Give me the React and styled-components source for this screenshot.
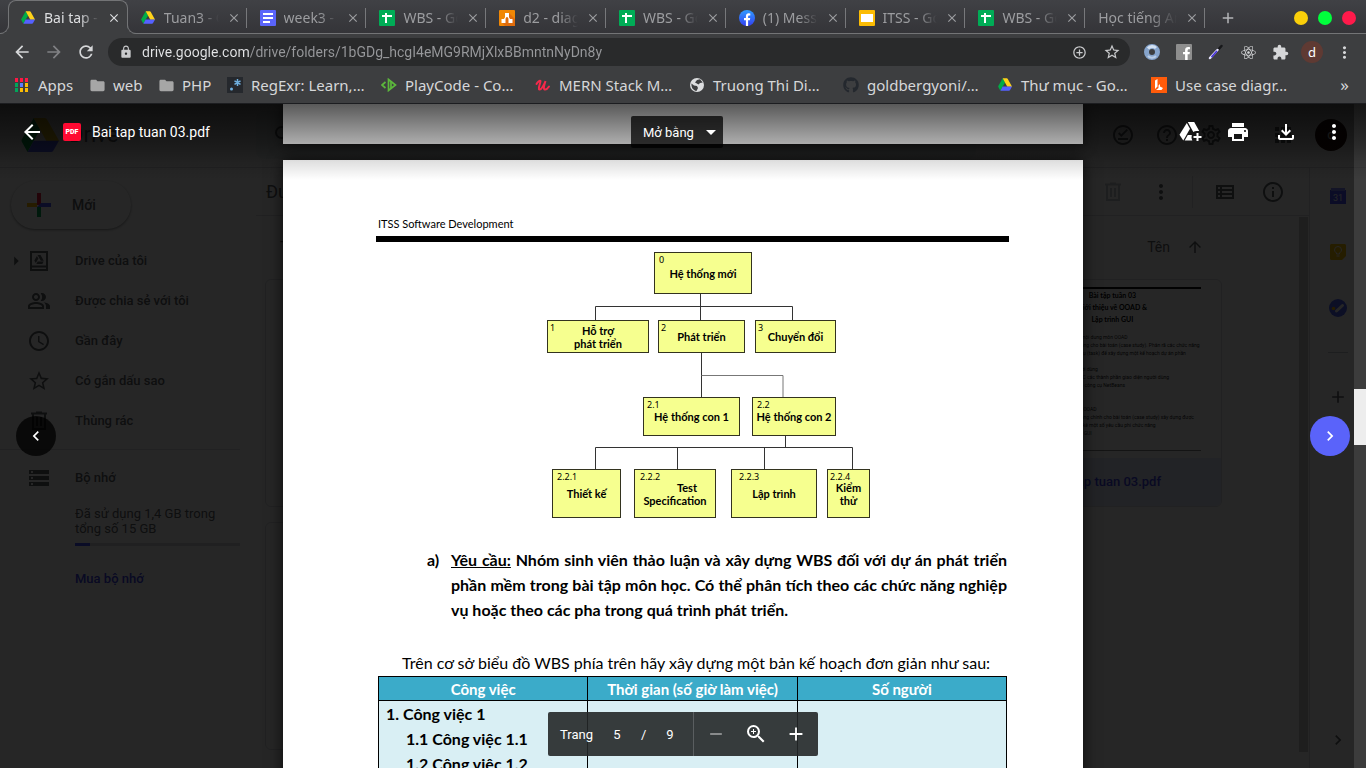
import React from "react";
import styled, { createGlobalStyle, css } from "styled-components";
import {
  MdArrowBack, MdArrowForward, MdRefresh, MdLock, MdAddCircleOutline, MdStarBorder, MdMoreVert, MdExtension,
  MdClose, MdAdd, MdRemove, MdFolder, MdPrint, MdOutlineFileDownload, MdArrowDropDown, MdArrowRight,
  MdChevronLeft, MdChevronRight, MdOutlineOfflinePin, MdHelpOutline, MdOutlineSettings, MdApps, MdSearch,
  MdOutlinePeopleAlt, MdAccessTime, MdStorage, MdInfoOutline, MdOutlineViewList, MdArrowUpward,
  MdZoomIn,
} from "react-icons/md";
import { FaReact, FaGithub, FaFacebookF } from "react-icons/fa";

const ui = `"Noto Sans", "Open Sans", sans-serif`;
const roboto = `Roboto, "Noto Sans", sans-serif`;
const doc = `Lato, "Open Sans", sans-serif`;
const frame = "#3d3e40";
const line = "#737476";

const Global = createGlobalStyle`
  *, *::before, *::after { box-sizing: border-box; }
  html, body { margin: 0; height: 100%; overflow: hidden; }
  button, input { font: inherit; color: inherit; border: 0; padding: 0; margin: 0; background: none; }
  a { color: inherit; text-decoration: none; }
  svg { display: block; flex: none; }
`;

const Window = styled.div`
  height: 100vh;
  display: flex;
  flex-direction: column;
  overflow: hidden;
  font-family: ${ui};
`;

/* ---------- browser frame ---------- */

const Frame = styled.header`
  flex: none;
  background: ${frame};
  border-bottom: 1px solid #1c1d20;
  color: #d6d7d9;
`;

const TabStrip = styled.div`
  height: 34px;
  display: flex;
  padding-left: 8px;
  background: linear-gradient(#404145, #343438);
  box-shadow: inset 0 -1px 0 ${line};
`;

const Tabs = styled.div`
  flex: 1;
  min-width: 0;
  display: flex;
`;

const flare = css`
  content: "";
  position: absolute;
  bottom: 0;
  width: 10px;
  height: 10px;
  border: 0 solid ${line};
  border-bottom-width: 1px;
  clip-path: inset(0);
  box-shadow: 0 0 0 8px ${frame};
`;

const Tab = styled.div`
  position: relative;
  flex: 1 1 0;
  min-width: 0;
  display: flex;
  align-items: center;
  gap: 8px;
  padding: 0 8px 0 11px;
  border: 1px solid transparent;
  border-bottom: 0;
  color: #9c9da0;
  font-size: 14px;
  ${(p) => p.$active && css`
    z-index: 1;
    color: #dddee0;
    background: ${frame};
    border-color: ${line};
    border-radius: 8px 8px 0 0;
    &::before { ${flare} left: -10px; border-right-width: 1px; border-bottom-right-radius: 9px; }
    &::after { ${flare} right: -10px; border-left-width: 1px; border-bottom-left-radius: 9px; }
  `}
  ${(p) => p.$divided && css`
    background: linear-gradient(#77787b, #77787b) right 7px / 1px 20px no-repeat;
  `}
`;

const TabTitle = styled.span`
  flex: 1;
  min-width: 0;
  overflow: hidden;
  white-space: nowrap;
  line-height: 20px;
  mask-image: linear-gradient(90deg, #000 65%, transparent 100%);
`;

const IconButton = styled.button`
  display: grid;
  place-items: center;
  flex: none;
  width: ${(p) => p.$w || 32}px;
  height: ${(p) => p.$h || 28}px;
  color: ${(p) => p.$color || "inherit"};
`;

const StripEnd = styled.div`
  width: 160px;
  display: flex;
  align-items: center;
  padding: 2px 10px 0 6px;
`;

const WindowDots = styled.div`
  margin-left: auto;
  display: flex;
  gap: 10px;
`;

const Dot = styled.button`
  width: 14px;
  height: 14px;
  border-radius: 50%;
  background: ${(p) => p.$fill};
`;

const AddressRow = styled.div`
  height: 36px;
  display: flex;
  align-items: center;
  padding: 0 6px;
`;

const Omnibox = styled.div`
  flex: 1;
  min-width: 0;
  height: 28px;
  margin: 0 6px;
  padding: 0 2px 0 11px;
  display: flex;
  align-items: center;
  gap: 9px;
  border-radius: 14px;
  background: #292a2b;
  color: #c9cacc;
`;

const Address = styled.input`
  flex: 1;
  min-width: 0;
  font-family: ${roboto};
  font-size: 14px;
  line-height: 20px;
  outline: 0;
  background: linear-gradient(90deg, #e4e5e7 107px, #97989b 107px);
  -webkit-background-clip: text;
  background-clip: text;
  color: transparent;
`;

const Avatar = styled.span`
  display: grid;
  place-items: center;
  width: ${(p) => p.$size}px;
  height: ${(p) => p.$size}px;
  border-radius: 50%;
  background: ${(p) => p.$fill};
  color: #fff;
  font-size: 13px;
  line-height: 16px;
`;

const BookmarkRow = styled.nav`
  height: 33px;
  display: flex;
  align-items: center;
  gap: 16px;
  padding: 0 17px 4px 14px;
`;

const Bookmark = styled.a`
  display: flex;
  align-items: center;
  gap: 8px;
  font-size: 15px;
  line-height: 24px;
  white-space: nowrap;
`;

const SiteIcon = styled.span`
  width: 16px;
  height: 16px;
  display: grid;
  place-items: center;
  flex: none;
`;

const BookmarkText = styled.span`
  width: ${(p) => p.$w}px;
`;

const More = styled.button`
  margin-left: auto;
  font-size: 17px;
  line-height: 24px;
`;

/* ---------- drive ---------- */

const Viewport = styled.main`
  position: relative;
  flex: 1;
  min-height: 0;
  overflow: hidden;
  background: #fff;
`;

const Drive = styled.div`
  height: 100%;
  display: flex;
  flex-direction: column;
  font-family: ${roboto};
  color: #5f6368;
`;

const DriveHeader = styled.div`
  flex: none;
  height: 64px;
  display: flex;
  align-items: center;
  padding: 0 19px 2px 21px;
  border-bottom: 1px solid #dadce0;
`;

const Brand = styled.div`
  width: 235px;
  display: flex;
  align-items: center;
  gap: 10px;
  font-size: 22px;
  line-height: 28px;
`;

const Search = styled.div`
  flex: 0 1 720px;
  height: 48px;
  padding: 0 16px;
  display: flex;
  align-items: center;
  border-radius: 8px;
  background: #f1f3f4;
`;

const HeaderTools = styled.div`
  margin-left: auto;
  display: flex;
  align-items: center;
  gap: 4px;
`;

const SupportTools = styled.div`
  display: flex;
  gap: 4px;
  margin-right: 20px;
`;

const DriveBody = styled.div`
  flex: 1;
  min-height: 0;
  display: flex;
`;

const Sidebar = styled.aside`
  flex: none;
  width: 256px;
  font-size: 13px;
  font-weight: 500;
`;

const NewButton = styled.button`
  margin: 13px 0 12px 11px;
  width: 120px;
  height: 48px;
  padding-left: 16px;
  display: flex;
  align-items: center;
  gap: 21px;
  border-radius: 24px;
  font-size: 14px;
  font-weight: 500;
  box-shadow: 0 1px 2px rgba(60, 64, 67, 0.4), 0 1px 3px 1px rgba(60, 64, 67, 0.15);
`;

const NavLink = styled.a`
  height: 40px;
  display: grid;
  grid-template-columns: 18px 24px 1fr;
  column-gap: 12px;
  align-items: center;
  padding-left: 7px;
  & > svg { justify-self: center; }
`;

const NavIcon = styled.span`
  width: 24px;
  margin-left: -10px;
`;

const NavText = styled.span`
  margin-left: -10px;
  padding: 0 0 2px 12px;
`;

const Storage = styled.section`
  width: 240px;
  margin-top: 8px;
  padding-top: 8px;
  border-top: 1px solid #dadce0;
`;

const StorageInfo = styled.div`
  padding: 8px 0 0 75px;
  font-weight: 400;
  line-height: 15px;
`;

const Meter = styled.div`
  height: 3px;
  margin: 7px 0 23px;
  background: linear-gradient(90deg, #4550ff 15px, #d4d6da 15px);
`;

const BuyLink = styled.a`
  color: #3c42e8;
  font-weight: 500;
  line-height: 20px;
`;

const Content = styled.section`
  flex: 1;
  min-width: 0;
  display: flex;
  flex-direction: column;
`;

const PathRow = styled.div`
  height: 48px;
  flex: none;
  display: flex;
  align-items: center;
  padding: 0 16px 0 10px;
  border-bottom: 1px solid #dadce0;
  font-size: 18px;
`;

const PathTools = styled.div`
  margin-left: auto;
  display: flex;
  align-items: center;
  gap: 8px;
`;

const Divider = styled.span`
  width: 1px;
  height: 32px;
  margin: 0 4px 0 3px;
  background: #dadce0;
`;

const Files = styled.div`
  flex: 1;
  min-height: 0;
  display: flex;
  padding: 1px 1px 16px 9px;
`;

const FileArea = styled.div`
  flex: 1;
  min-width: 0;
  height: 100%;
  padding-right: 77px;
  overflow: hidden;
`;

const SortRow = styled.div`
  height: 62px;
  display: flex;
  align-items: center;
  justify-content: space-between;
  padding: 0 18px 2px 15px;
  font-size: 14px;
`;

const SortButton = styled.button`
  display: flex;
  align-items: center;
  gap: 16px;
`;

const Cards = styled.div`
  display: grid;
  grid-template-columns: repeat(4, 1fr);
  grid-auto-rows: 228px;
  gap: 15px 16px;
`;

const Card = styled.article`
  display: flex;
  flex-direction: column;
  justify-content: space-between;
  border: 1px solid #dadce0;
  border-radius: 6px;
  overflow: hidden;
`;

const Thumb = styled.div`
  margin: 7px 20px 0;
  border-top: 2px solid #111;
  border-bottom: 1px solid #888;
  height: 164px;
  overflow: hidden;
  color: #222;
  font-size: 5px;
  line-height: 8px;
  white-space: pre;
  padding-left: 40px;
`;

const ThumbTitle = styled.div`
  margin: 0 0 8px -32px;
  color: #000;
  font-family: ${doc};
  font-size: 7px;
  font-weight: 700;
  line-height: 12px;
  text-align: center;
`;

const CardName = styled.div`
  height: 48px;
  padding-left: 55px;
  line-height: 48px;
  font-size: 13px;
  font-weight: 500;
  color: #3c42e8;
  background: #e4e8fb;
`;

const InnerScroll = styled.div`
  width: 9px;
  background: #c6c6c6;
`;

const SidePanel = styled.aside`
  flex: none;
  width: 57px;
  border-left: 1px solid #dadce0;
  display: flex;
  flex-direction: column;
  align-items: center;
  padding: 16px 0;
  gap: 32px;
`;

const PanelRule = styled.span`
  width: 20px;
  height: 1px;
  background: #c4c7cc;
`;

const PanelEnd = styled.div`
  margin-top: auto;
`;

/* ---------- preview ---------- */

const Preview = styled.div`
  position: absolute;
  inset: 0;
  background: rgba(0, 0, 0, 0.85);
  font-family: ${roboto};
  color: #fff;
`;

const Pages = styled.div`
  height: 100%;
  overflow: hidden;
  display: flex;
  flex-direction: column;
  align-items: center;
  gap: 16px;
`;

const Sheet = styled.article`
  flex: none;
  width: 800px;
  max-width: 100%;
  min-height: 40px;
  background: #fff;
  color: #000;
  box-shadow: 0 0 14px rgba(0, 0, 0, 0.7);
`;

const SheetBody = styled.div`
  padding: 56px 74px 40px 93px;
  font-family: ${doc};
`;

const RunningHead = styled.div`
  padding-left: 2px;
  font-size: 11px;
  line-height: 16px;
`;

const HeadRule = styled.div`
  height: 6px;
  margin-top: 4px;
  background: #000;
`;

const Diagram = styled.div`
  position: relative;
  height: 305px;
`;

const Links = styled.svg`
  position: absolute;
  left: 0;
  top: 0;
`;

const Node = styled.div`
  position: absolute;
  left: ${(p) => p.$x}px;
  top: ${(p) => p.$y}px;
  width: ${(p) => p.$w}px;
  height: ${(p) => p.$h}px;
  display: flex;
  flex-direction: column;
  align-items: center;
  justify-content: center;
  border: 1px solid #33331f;
  background: #f6ff8f;
  font-size: 11px;
  font-weight: 700;
  line-height: 13px;
  white-space: nowrap;
`;

const NodeNumber = styled.span`
  position: absolute;
  top: 0;
  left: ${(p) => p.$inset}px;
  font-family: ${ui};
  font-size: 9px;
  font-weight: 400;
`;

const NodeLine = styled.span`
  padding-left: ${(p) => p.$indent || 0}px;
`;

const Task = styled.div`
  display: grid;
  grid-template-columns: 24px 1fr;
  padding: 0 2px 0 51px;
  font-size: 16px;
  font-weight: 700;
  line-height: 25px;
`;

const TaskText = styled.p`
  margin: 0;
  text-align: justify;
`;

const Intro = styled.p`
  margin: 27px 0 0 26px;
  font-size: 16px;
  line-height: 27px;
  white-space: nowrap;
`;

const PlanTable = styled.table`
  width: calc(100% - 4px);
  margin: 0 2px;
  table-layout: fixed;
  border-collapse: collapse;
  font-size: 16px;
  line-height: 25px;
  font-weight: 700;
  th, td { border: 1px solid #000; }
  th { padding: 0; height: 24px; font-size: 15px; line-height: 22px; background: #3babc9; color: #fff; }
  td { padding: 0 7px; background: #d9eff4; vertical-align: top; }
`;

const Step = styled.div`
  padding-left: ${(p) => (p.$sub ? 20 : 0)}px;
`;

const PreviewBar = styled.div`
  position: absolute;
  inset: 0 0 auto 0;
  height: 76px;
  display: flex;
  align-items: flex-start;
  padding: 8px 12px 0;
  background: linear-gradient(rgba(0, 0, 0, 0.65), rgba(0, 0, 0, 0.32) 52%, rgba(0, 0, 0, 0.12) 76%, transparent);
`;

const FileName = styled.div`
  display: flex;
  align-items: center;
  gap: 11px;
  height: 40px;
  padding-left: 11px;
  font-size: 14px;
`;

const PdfBadge = styled.span`
  width: 18px;
  height: 18px;
  border-radius: 2px;
  background: #ff0a32;
  font-size: 7px;
  font-weight: 900;
  line-height: 18px;
  text-align: center;
`;

const BarTools = styled.div`
  margin-left: auto;
  display: flex;
  gap: 8px;
`;

const OpenWith = styled.button`
  position: absolute;
  top: 12px;
  left: calc(50% - 52px);
  width: 92px;
  height: 32px;
  display: flex;
  align-items: center;
  justify-content: space-between;
  padding: 0 0 0 12px;
  border-radius: 2px;
  background: rgba(0, 0, 0, 0.75);
  font-size: 13px;
`;

const Turn = styled.button`
  position: absolute;
  top: 312px;
  ${(p) => p.$side}: 16px;
  width: 40px;
  height: 40px;
  display: grid;
  place-items: center;
  border-radius: 50%;
  background: ${(p) => p.$fill};
`;

const Pager = styled.div`
  position: absolute;
  left: 50%;
  bottom: 12px;
  transform: translateX(-50%);
  width: 270px;
  height: 44px;
  display: flex;
  align-items: center;
  border-radius: 2px;
  background: rgba(35, 39, 40, 0.9);
  font-size: 13px;
`;

const PageCount = styled.div`
  width: 146px;
  height: 100%;
  display: flex;
  align-items: center;
  padding-left: 12px;
  border-right: 1px solid #5a5e60;
`;

const PageInput = styled.input`
  width: 32px;
  margin: 0 8px;
  text-align: center;
`;

const Total = styled.span`
  margin-left: 20px;
`;

const ZoomTools = styled.div`
  display: flex;
  padding-left: 2px;
`;

const ScrollTrack = styled.div`
  position: absolute;
  inset: 0 0 0 auto;
  width: 12px;
  padding-top: 285px;
  background: rgba(255, 255, 255, 0.1);
`;

const ScrollThumb = styled.div`
  height: 56px;
  background: #ededed;
`;

/* ---------- drawings ---------- */

const DriveLogo = ({ size = 14 }) => (
  <svg width={size} height={Math.round(size * 0.9)} viewBox="0 0 87 78">
    <path fill="#00ac47" d="M29 0 44 26 15 78 2 55q-2-3 0-6z" />
    <path fill="#ffd31a" d="M29 0h26q3 0 5 4l25 44q2 3 2 5H58z" />
    <path fill="#5561ff" d="M29 52h58L74 75q-2 3-5 3H15z" />
  </svg>
);
const Sheets = () => (
  <svg width="16" height="16"><rect width="16" height="16" rx="1" fill="#00ac56" /><path fill="#fff" d="M3 5h10v2H8v6H6V7H3zM6 3h2v3H6z" /></svg>
);
const Docs = () => (
  <svg width="16" height="16"><rect width="16" height="16" rx="1" fill="#5a64fa" /><path stroke="#fff" strokeWidth="2" d="M3 4h10M3 8h10M3 12h7" /></svg>
);
const Slides = () => (
  <svg width="16" height="16"><rect width="16" height="16" rx="1" fill="#fbbc04" /><path fill="#fff" d="M2 4h12v8H2z" /></svg>
);
const Diagrams = () => (
  <svg width="16" height="16"><rect width="16" height="16" rx="1" fill="#f08705" /><path fill="#df6c0c" d="m10 3 6 6v7H6l-3-3z" /><path fill="#fff" d="M6 3h4v4H6zM2.500 9h4v4h-4zM9.500 9h4v4h-4z" /><path stroke="#fff" strokeWidth="1.300" d="M7.500 6 5 10M8.500 6l2.500 4" /></svg>
);
const Facebook = () => (
  <svg width="16" height="16" viewBox="0 0 16 16">
    <defs><linearGradient id="fb" x2="0" y2="1"><stop stopColor="#2f9bff" /><stop offset="1" stopColor="#3440f0" /></linearGradient></defs>
    <circle cx="8" cy="8" r="8" fill="url(#fb)" /><path fill="#fff" d="M6.900 16v-5.700H5V8h1.900V6.400C6.900 4.300 8 3.300 9.700 3.300l1.600.1v2h-1c-.9 0-1.200.5-1.200 1.200V8h2.100l-.3 2.300H9.100V16z" />
  </svg>
);
const AppsGrid = () => (
  <svg width="14" height="14">
    {["#ff1744", "#00a65a", "#fbbc04"].map((c, r) => [0, 5, 10].map((x, i) => (
      <rect key={r + "-" + x} x={x} y={r * 5} width="3" height="4" fill={r === 1 && i === 1 ? "#5a7bff" : r === 1 && i === 2 ? "#fbbc04" : r === 2 && i === 0 ? "#00a65a" : c} />
    )))}
  </svg>
);
const RegExr = () => (
  <svg width="16" height="16"><rect width="16" height="16" fill="#25282d" /><circle cx="4.500" cy="12" r="1.500" fill="#70b0e0" /><path stroke="#70b0e0" strokeWidth="1.500" d="M10.500 2v7M7.500 3.800l6 3.500M13.500 3.800l-6 3.500" /></svg>
);
const PlayCode = () => (
  <svg width="16" height="14" fill="none" stroke="#5cb83c" strokeWidth="1.700"><path d="M4.500 4 1 7l3.500 3M7.500 1.500 14.500 7l-7 5.500z" /><path d="M10 4v6" /></svg>
);
const Udemy = () => (
  <svg width="16" height="16" fill="none" stroke="#f5294a" strokeWidth="2" strokeLinecap="round"><path d="M1.500 7C3 4.500 5 3 5.500 4S2.500 12 4.500 12.500 9.500 7 10.500 4C9.500 7 8 12 9.700 12.500S13 11 14 9.500" /></svg>
);
const Globe = () => (
  <svg width="16" height="16"><circle cx="8" cy="8" r="7" fill="#dcdddf" /><path fill={frame} d="M2.500 6.500 5 8.500l3 .5 1 2-1.500 3C4 13.500 2 10 2.500 6.500zM8 3l3-.8 2.800 3.300L11 6 9.500 7.500 7 6l-1-.5z" /></svg>
);
const Lucid = () => (
  <svg width="16" height="16"><rect width="16" height="16" fill="#ff5b0a" /><path fill="#fff" d="M4 3.500 6.500 2v7.500L4 12zM7.500 8.500 9 7v2.500l3 1.500-1.500 2H5l2.500-2z" /></svg>
);
const Ring = () => (
  <svg width="16" height="16" fill="none"><circle cx="8" cy="8" r="5.500" stroke="#86a4cc" strokeWidth="5" /><path d="M4 4.500A5.500 5.500 0 0 1 12 4" stroke="#d3e1f2" strokeWidth="3" /><path d="M4 12a5.500 5.500 0 0 0 8 0" stroke="#b9cce5" strokeWidth="2" /></svg>
);
const Picker = () => (
  <svg width="16" height="16" fill="none" strokeLinecap="round"><path d="m8.500 7.500 5-5.500" stroke="#17181a" strokeWidth="2.500" /><path d="m2 14 7.500-8" stroke="#e6e3ff" strokeWidth="2.500" /><path d="m4 12.500 4.500-5" stroke="#4a35d8" strokeWidth="1.800" /></svg>
);
const MyDriveIcon = () => (
  <svg width="24" height="24"><path fill="none" stroke="currentColor" strokeWidth="2" d="M4 3h16v18H4zM4 17.500h16" /><path fill="currentColor" d="M10.500 6h3l3.300 5.700h-3zM9.900 7l1.500 2.600L8.800 14l-1.500-2.500zM10.700 12.500h6L15.300 15H9.300z" /></svg>
);
const Trash = () => (
  <svg width="24" height="24" fill="none" stroke="currentColor" strokeWidth="2"><path d="M4 4.500h16M9 3.500h6M6 5v15h12V5M10 8v9M14 8v9" /></svg>
);
const AddToDrive = () => (
  <svg width="24" height="24" fill="#fff">
    <path d="M8.800 3 12 8.700 5.300 20.500 1.500 14.800z" />
    <path d="M9.800 2h6.400l5 9h-2.700q-1.700 0-3.200 1z" />
    <path d="M9.800 15h4q-.8 2.800.5 5.500H6.700z" />
    <path d="M18.500 13h2v3h3v2h-3v3h-2v-3h-3v-2h3z" />
  </svg>
);
const ColorPlus = () => (
  <svg width="24" height="24"><path fill="#ea1f3c" d="M10 0h4v12h-4z" /><path fill="#fbbc04" d="M0 10h10v4H0z" /><path fill="#4e58ff" d="M14 10h10v4H10z" /><path fill="#00a650" d="M10 14h4v10h-4z" /></svg>
);
const Calendar = () => (
  <svg width="16" height="16"><path fill="#4a50ff" d="M0 2h16v14H0z" /><path fill="#7d84ff" d="M1 0h14v3H1z" /><text x="8" y="13" textAnchor="middle" fontFamily="Roboto" fontSize="9" fill="#fff">31</text></svg>
);
const Keep = () => (
  <svg width="16" height="16"><path fill="#f9bf00" d="M1 0h14l1 1v11l-4 4H1l-1-1V1z" /><path fill="none" stroke="#fff" d="M6.500 10V9Q4.500 7.500 4.500 6a3.500 3.500 0 0 1 7 0q0 1.500-2 3v1zM6.500 12h3" /></svg>
);
const Tasks = () => (
  <svg width="18" height="18"><circle cx="9" cy="9" r="9" fill="#4f63f5" /><path stroke="#fff" strokeWidth="3" strokeLinecap="round" d="m7.500 12 6-5.500" /><circle cx="4.500" cy="9.500" r="1.800" fill="#fbbc04" /></svg>
);

/* ---------- data ---------- */

const tabs = [
  ["Bai tap - Google Drive", <DriveLogo />], ["Tuan3 - Google Drive", <DriveLogo />], ["week3 - Google Docs", <Docs />],
  ["WBS - Google Sheets", <Sheets />], ["d2 - diagrams.net", <Diagrams />], ["WBS - Google Sheets", <Sheets />],
  ["(1) Messenger", <Facebook />], ["ITSS - Google Slides", <Slides />], ["WBS - Google Sheets", <Sheets />],
  ["Học tiếng Anh", null],
];

const bookmarks = [
  ["Apps", 35, <AppsGrid />], ["web", 29, <MdFolder size={17} color="#a6a6a6" />], ["PHP", 29, <MdFolder size={17} color="#a6a6a6" />],
  ["RegExr: Learn,…", 114, <RegExr />], ["PlayCode - Co…", 114, <PlayCode />], ["MERN Stack M…", 114, <Udemy />],
  ["Truong Thi Di…", 114, <Globe />], ["goldbergyoni/…", 114, <FaGithub size={16} color="#24282e" />],
  ["Thư mục - Go…", 114, <DriveLogo />], ["Use case diagr…", 114, <Lucid />],
];

const navItems = [
  ["Drive của tôi", <MyDriveIcon />], ["Được chia sẻ với tôi", <MdOutlinePeopleAlt size={24} />], ["Gần đây", <MdAccessTime size={24} />],
  ["Có gắn dấu sao", <MdStarBorder size={24} />], ["Thùng rác", <Trash />],
];

const nodes = [
  { x: 278, y: 10, w: 98, h: 42, n: "0", inset: 4, text: ["Hệ thống mới"] },
  { x: 171, y: 78, w: 102, h: 33, n: "1", inset: 2, text: ["Hỗ trợ", "phát triển"] },
  { x: 282, y: 78, w: 87, h: 33, n: "2", inset: 2, text: ["Phát triển"] },
  { x: 379, y: 78, w: 81, h: 33, n: "3", inset: 2, text: ["Chuyển đổi"] },
  { x: 267, y: 155, w: 97, h: 39, n: "2.1", inset: 3, text: ["Hệ thống con 1"] },
  { x: 376, y: 155, w: 84, h: 39, n: "2.2", inset: 4, text: ["Hệ thống con 2"] },
  { x: 176, y: 227, w: 69, h: 49, n: "2.2.1", inset: 4, text: ["Thiết kế"] },
  { x: 258, y: 227, w: 82, h: 49, n: "2.2.2", inset: 5, indent: 24, text: ["Test", "Specification"] },
  { x: 355, y: 227, w: 86, h: 49, n: "2.2.3", inset: 7, text: ["Lập trình"] },
  { x: 451, y: 227, w: 43, h: 49, n: "2.2.4", inset: 2, text: ["Kiểm", "thử"] },
];

const thumbText = `Tìm hiểu về nội dung môn OOAD
Các chức năng cho bài toán (case study). Phân rã các chức năng
Các nhiệm vụ (task) để xây dựng một kế hoạch dự án phần

Đồ họa người dùng
Mô hình MVC các thành phần giao diện người dùng
Lập GUI trên công cụ NetBeans
Giao diện

Về nội dung OOAD
Các chức năng chính cho bài toán (case study) xây dựng được
Bảng và liệt kê một số yêu cầu phi chức năng
Kết lập trình GUI`;

/* ---------- sections ---------- */

function BrowserFrame() {
  return (
    <Frame>
      <TabStrip>
        <Tabs>
          {tabs.map(([title, icon], i) => (
            <Tab key={i} $active={i === 0} $divided={i > 0}>
              {icon && <SiteIcon>{icon}</SiteIcon>}
              <TabTitle>{title}</TabTitle>
              <IconButton $w={12} $h={20} aria-label="Close tab"><MdClose size={14} /></IconButton>
            </Tab>
          ))}
        </Tabs>
        <StripEnd>
          <IconButton aria-label="New tab" $color="#b4b5b8"><MdAdd size={18} /></IconButton>
          <WindowDots>
            <Dot $fill="#facf0a" aria-label="Minimise" />
            <Dot $fill="#00ff3c" aria-label="Maximise" />
            <Dot $fill="#ff1a4b" aria-label="Close" />
          </WindowDots>
        </StripEnd>
      </TabStrip>
      <AddressRow>
        <IconButton aria-label="Back"><MdArrowBack size={20} /></IconButton>
        <IconButton aria-label="Forward" $color="#808184"><MdArrowForward size={20} /></IconButton>
        <IconButton aria-label="Reload"><MdRefresh size={20} /></IconButton>
        <Omnibox>
          <MdLock size={14} />
          <Address aria-label="Address" defaultValue="drive.google.com/drive/folders/1bGDg_hcgI4eMG9RMjXlxBBmntnNyDn8y" />
          <IconButton $w={15} aria-label="Zoom"><MdAddCircleOutline size={15} /></IconButton>
          <IconButton aria-label="Bookmark"><MdStarBorder size={18} /></IconButton>
        </Omnibox>
        <IconButton aria-label="Ring extension"><Ring /></IconButton>
        <IconButton aria-label="Facebook extension">
          <svg width="16" height="16"><rect width="16" height="16" rx="1" fill="#8e8e8e" /><g transform="translate(4 3)"><FaFacebookF size={13} color="#fff" /></g></svg>
        </IconButton>
        <IconButton aria-label="Colour picker"><Picker /></IconButton>
        <IconButton aria-label="React extension"><FaReact size={15} /></IconButton>
        <IconButton aria-label="Extensions"><MdExtension size={17} /></IconButton>
        <IconButton aria-label="Profile"><Avatar $size={22} $fill="#5f3a33">d</Avatar></IconButton>
        <IconButton aria-label="Menu"><MdMoreVert size={19} /></IconButton>
      </AddressRow>
      <BookmarkRow>
        {bookmarks.map(([text, w, icon]) => (
          <Bookmark href="#" key={text}>
            <SiteIcon>{icon}</SiteIcon>
            <BookmarkText $w={w}>{text}</BookmarkText>
          </Bookmark>
        ))}
        <More aria-label="More bookmarks">»</More>
      </BookmarkRow>
    </Frame>
  );
}

function DriveApp() {
  return (
    <Drive>
      <DriveHeader>
        <Brand><DriveLogo size={38} />Drive</Brand>
        <Search><MdSearch size={24} /></Search>
        <HeaderTools>
          <SupportTools>
            <IconButton $w={40} aria-label="Offline"><MdOutlineOfflinePin size={24} /></IconButton>
            <IconButton $w={40} aria-label="Help"><MdHelpOutline size={24} /></IconButton>
            <IconButton $w={40} aria-label="Settings"><MdOutlineSettings size={24} /></IconButton>
          </SupportTools>
          <IconButton $w={56} aria-label="Apps"><MdApps size={24} /></IconButton>
          <Avatar $size={32} $fill="#2a100a">d</Avatar>
        </HeaderTools>
      </DriveHeader>
      <DriveBody>
        <Sidebar>
          <NewButton><ColorPlus />Mới</NewButton>
          {navItems.map(([text, icon], i) => (
            <NavLink href="#" key={text}>
              {i === 0 ? <MdArrowRight size={22} /> : <span />}
              <NavIcon>{icon}</NavIcon>
              <NavText>{text}</NavText>
            </NavLink>
          ))}
          <Storage>
            <NavLink href="#"><span /><NavIcon><MdStorage size={24} /></NavIcon><NavText>Bộ nhớ</NavText></NavLink>
            <StorageInfo>
              Đã sử dụng 1,4 GB trong<br />tổng số 15 GB
              <Meter />
              <BuyLink href="#">Mua bộ nhớ</BuyLink>
            </StorageInfo>
          </Storage>
        </Sidebar>
        <Content>
          <PathRow>
            Được chia sẻ
            <PathTools>
              <IconButton $w={40} aria-label="Remove" $color="#c4c7cc"><Trash /></IconButton>
              <IconButton $w={40} aria-label="More"><MdMoreVert size={24} /></IconButton>
              <Divider />
              <IconButton $w={40} aria-label="List view"><MdOutlineViewList size={24} /></IconButton>
              <IconButton $w={40} aria-label="Details"><MdInfoOutline size={24} /></IconButton>
            </PathTools>
          </PathRow>
          <Files>
            <FileArea>
              <SortRow>
                <span>Tệp</span>
                <SortButton>Tên<MdArrowUpward size={18} /></SortButton>
              </SortRow>
              <Cards>
                <Card /><Card /><Card />
                <Card>
                  <Thumb>
                    <ThumbTitle>Bài tập tuần 03<br />Giới thiệu về OOAD &amp;<br />Lập trình GUI</ThumbTitle>
                    {thumbText}
                  </Thumb>
                  <CardName>Bai tap tuan 03.pdf</CardName>
                </Card>
                <Card />
              </Cards>
            </FileArea>
            <InnerScroll />
          </Files>
        </Content>
        <SidePanel>
          <IconButton $w={24} $h={24} aria-label="Calendar"><Calendar /></IconButton>
          <IconButton $w={24} $h={24} aria-label="Keep"><Keep /></IconButton>
          <IconButton $w={24} $h={24} aria-label="Tasks"><Tasks /></IconButton>
          <PanelRule />
          <IconButton $w={24} $h={24} aria-label="Add-ons"><MdAdd size={20} /></IconButton>
          <PanelEnd><IconButton $w={24} $h={24} aria-label="Hide panel"><MdChevronRight size={20} /></IconButton></PanelEnd>
        </SidePanel>
      </DriveBody>
    </Drive>
  );
}

function WbsDiagram() {
  return (
    <Diagram>
      <Links width="633" height="304" fill="none" stroke="#333">
        <path d="M324.500 52v26M219.500 78V64.500h197V78M325.500 111v44" />
        <path stroke="#777" d="M325.500 133.500h81.500V155" />
        <path d="M409.500 194v11M219.500 227v-21.500h257V227M301.500 205v22M388.500 205v22" />
      </Links>
      {nodes.map((d) => (
        <Node key={d.n} $x={d.x} $y={d.y} $w={d.w} $h={d.h}>
          <NodeNumber $inset={d.inset}>{d.n}</NodeNumber>
          {d.text.map((t, i) => <NodeLine key={t} $indent={i === 0 ? d.indent : 0}>{t}</NodeLine>)}
        </Node>
      ))}
    </Diagram>
  );
}

function FilePreview() {
  return (
    <Preview>
      <Pages>
        <Sheet />
        <Sheet>
          <SheetBody>
            <RunningHead>ITSS Software Development</RunningHead>
            <HeadRule />
            <WbsDiagram />
            <Task>
              <span>a)</span>
              <TaskText>
                <u>Yêu cầu:</u> Nhóm sinh viên thảo luận và xây dựng WBS đối với dự án phát triển phần mềm trong bài tập
                môn học. Có thể phân tích theo các chức năng nghiệp vụ hoặc theo các pha trong quá trình phát triển.
              </TaskText>
            </Task>
            <Intro>Trên cơ sở biểu đồ WBS phía trên hãy xây dựng một bản kế hoạch đơn giản như sau:</Intro>
            <PlanTable>
              <thead><tr><th>Công việc</th><th>Thời gian (số giờ làm việc)</th><th>Số người</th></tr></thead>
              <tbody>
                <tr>
                  <td><Step>1. Công việc 1</Step><Step $sub>1.1 Công việc 1.1</Step><Step $sub>1.2 Công việc 1.2</Step></td>
                  <td /><td />
                </tr>
              </tbody>
            </PlanTable>
          </SheetBody>
        </Sheet>
      </Pages>
      <ScrollTrack><ScrollThumb /></ScrollTrack>
      <PreviewBar>
        <IconButton $w={40} $h={40} aria-label="Back"><MdArrowBack size={24} /></IconButton>
        <FileName><PdfBadge>PDF</PdfBadge>Bai tap tuan 03.pdf</FileName>
        <BarTools>
          <IconButton $w={40} $h={40} aria-label="Add shortcut to Drive"><AddToDrive /></IconButton>
          <IconButton $w={40} $h={40} aria-label="Print"><MdPrint size={24} /></IconButton>
          <IconButton $w={40} $h={40} aria-label="Download"><MdOutlineFileDownload size={24} /></IconButton>
          <IconButton $w={40} $h={40} aria-label="More actions"><MdMoreVert size={24} /></IconButton>
        </BarTools>
      </PreviewBar>
      <OpenWith>Mở bằng<MdArrowDropDown size={24} /></OpenWith>
      <Turn $side="left" $fill="rgba(0, 0, 0, 0.75)" aria-label="Previous file"><MdChevronLeft size={20} /></Turn>
      <Turn $side="right" $fill="#5a63fa" aria-label="Next file"><MdChevronRight size={20} /></Turn>
      <Pager>
        <PageCount>
          <label htmlFor="page">Trang</label>
          <PageInput id="page" defaultValue="5" />
          <span>/</span>
          <Total>9</Total>
        </PageCount>
        <ZoomTools>
          <IconButton $w={40} $h={40} $color="#9a9c9d" aria-label="Zoom out"><MdRemove size={20} /></IconButton>
          <IconButton $w={40} $h={40} aria-label="Reset zoom"><MdZoomIn size={24} /></IconButton>
          <IconButton $w={40} $h={40} aria-label="Zoom in"><MdAdd size={22} /></IconButton>
        </ZoomTools>
      </Pager>
    </Preview>
  );
}

export default function App() {
  return (
    <Window>
      <Global />
      <BrowserFrame />
      <Viewport>
        <DriveApp />
        <FilePreview />
      </Viewport>
    </Window>
  );
}
